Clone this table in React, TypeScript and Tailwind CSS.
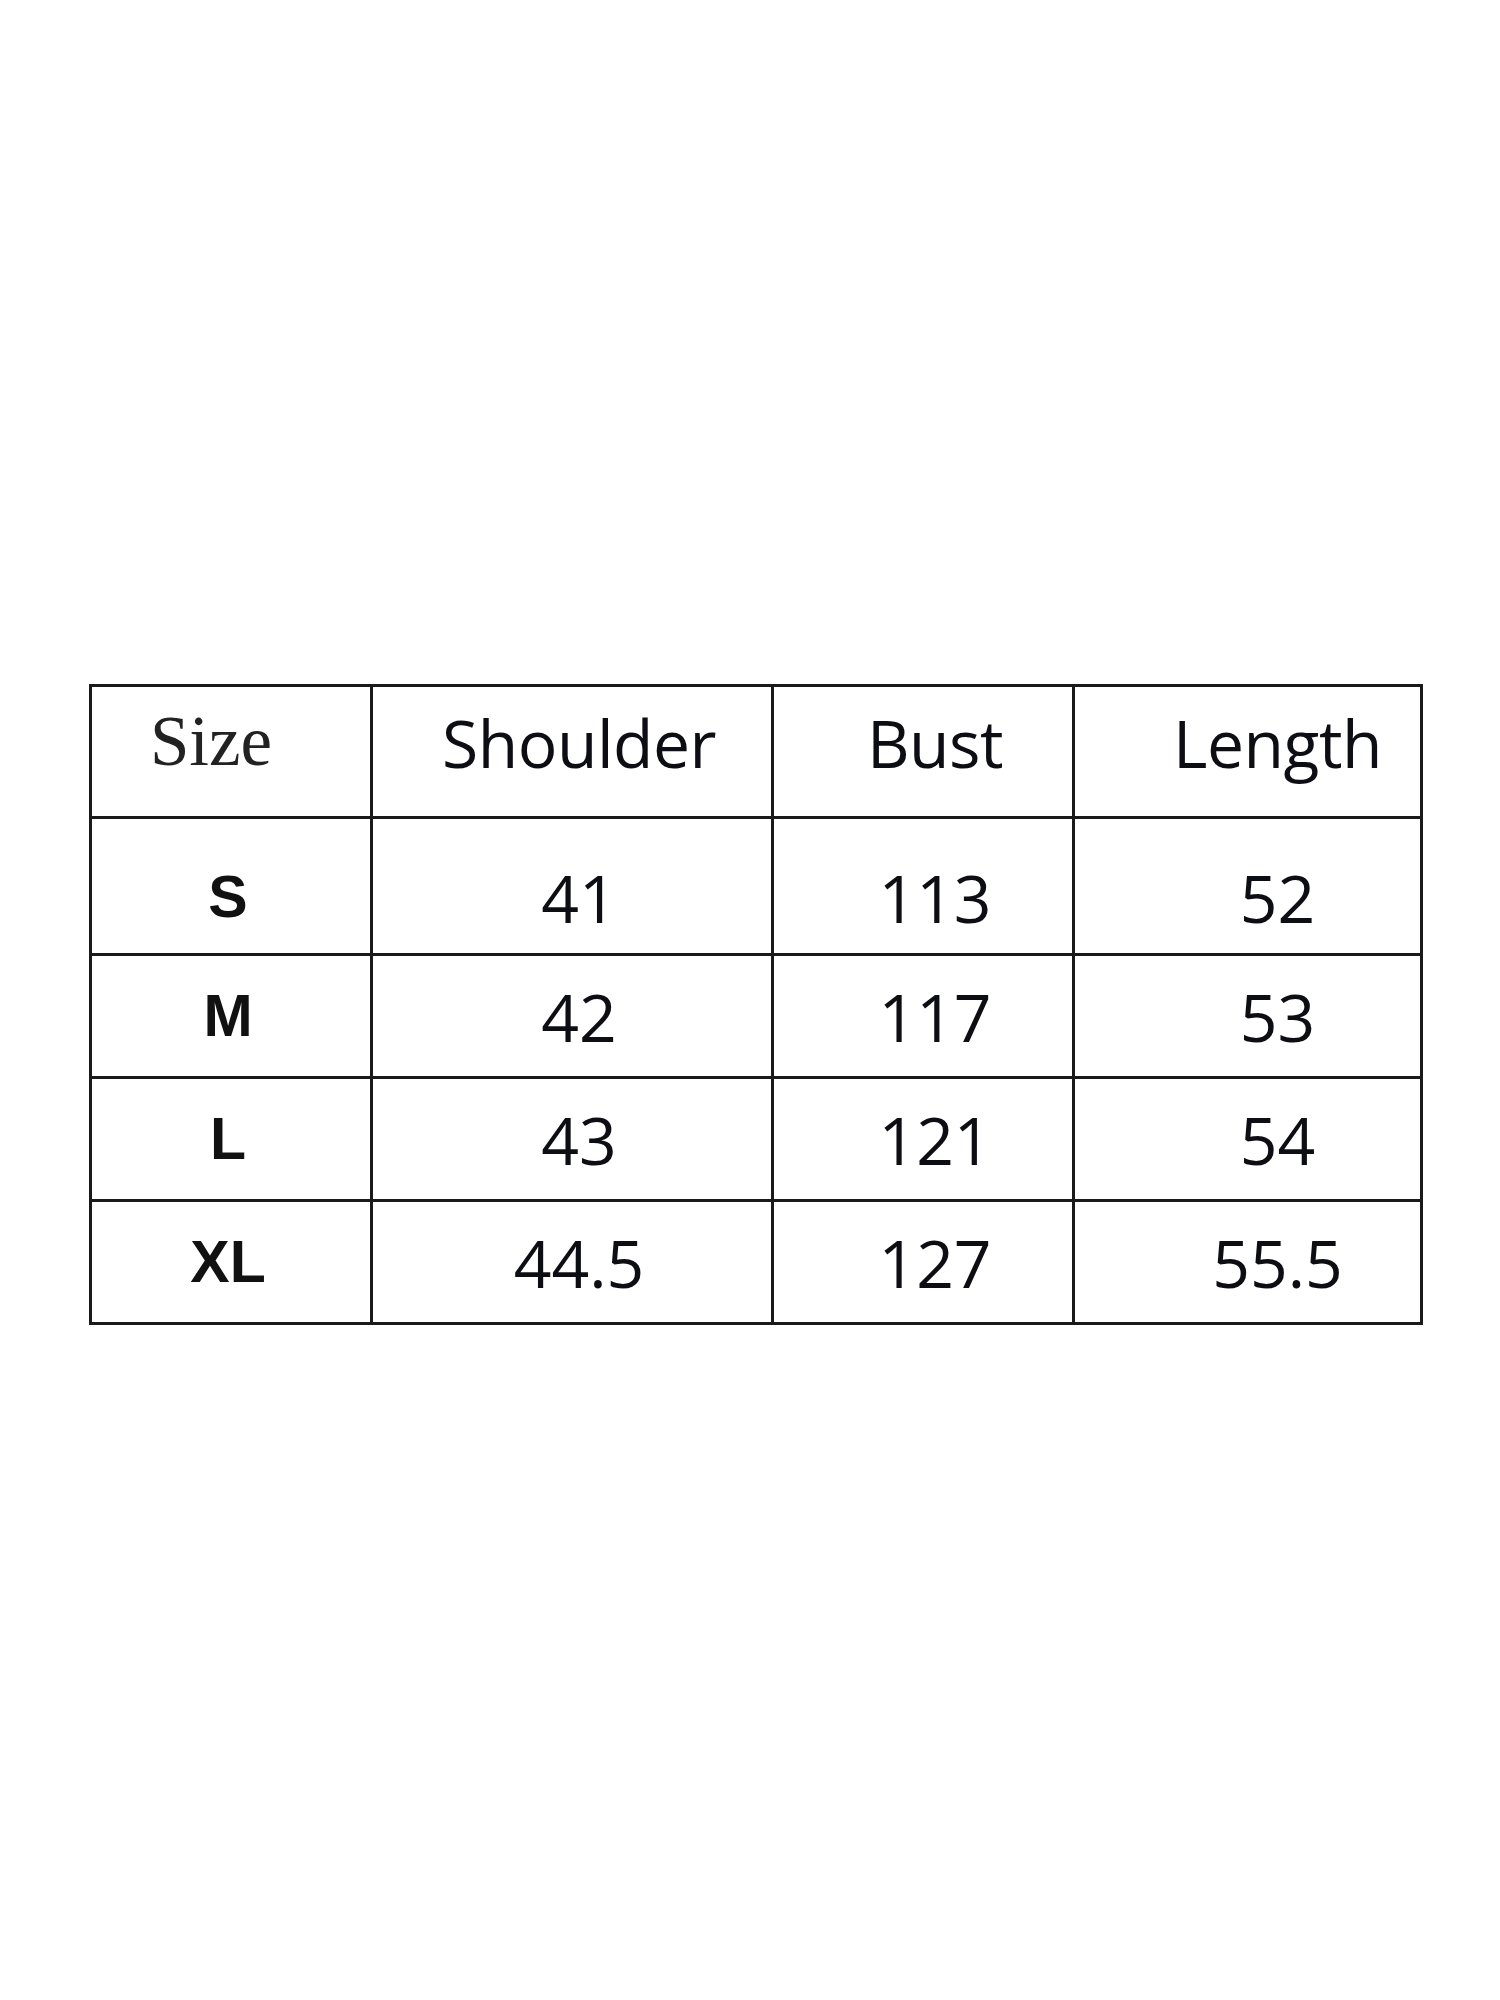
const columns = ["Shoulder", "Bust", "Length"]

const rows = [
  { size: "S", values: ["41", "113", "52"] },
  { size: "M", values: ["42", "117", "53"] },
  { size: "L", values: ["43", "121", "54"] },
  { size: "XL", values: ["44.5", "127", "55.5"] },
]

// nudges the text off the cell centre, like the source image
const colPad = ["pl-[14px]", "pl-[24px]", "pl-[60px]"]
const rowHeights = ["h-[137px] pt-[22px]", "h-[123px]", "h-[123px]", "h-[123px]"]

const sans = "font-['Open_Sans',sans-serif]"

export default function App() {
  return (
    <div className="w-[1500px] h-[2000px] bg-white pt-[684px] pl-[89px]">
      <div className="grid grid-cols-[281px_401px_301px_348px] w-max border-l-[3px] border-t-[3px] border-[#1a1a1a]">
        {/* header */}
        <div className="h-[132px] pb-[20px] pr-[40px] flex items-center justify-center border-r-[3px] border-b-[3px] border-[#1a1a1a]">
          <span className="font-['Liberation_Serif',serif] text-[71px] leading-none text-[#222]">Size</span>
        </div>
        {columns.map((c, i) => (
          <div
            key={c}
            className={`h-[132px] pb-[20px] flex items-center justify-center border-r-[3px] border-b-[3px] border-[#1a1a1a] ${colPad[i]}`}
          >
            <span className={`${sans} text-[66px] font-medium leading-none tracking-[-0.5px] text-[#0d0d14]`}>{c}</span>
          </div>
        ))}

        {/* body */}
        {rows.map((r, ri) => (
          <div key={r.size} className="contents">
            <div
              className={`${rowHeights[ri]} pr-[6px] flex items-center justify-center border-r-[3px] border-b-[3px] border-[#1a1a1a]`}
            >
              <span className="font-['Liberation_Sans',sans-serif] text-[59px] font-bold leading-none text-[#111]">
                {r.size}
              </span>
            </div>
            {r.values.map((v, i) => (
              <div
                key={i}
                className={`${rowHeights[ri]} flex items-center justify-center border-r-[3px] border-b-[3px] border-[#1a1a1a] ${colPad[i]}`}
              >
                <span className={`${sans} text-[66px] font-medium leading-none text-[#0d0d14]`}>{v}</span>
              </div>
            ))}
          </div>
        ))}
      </div>
    </div>
  )
}
